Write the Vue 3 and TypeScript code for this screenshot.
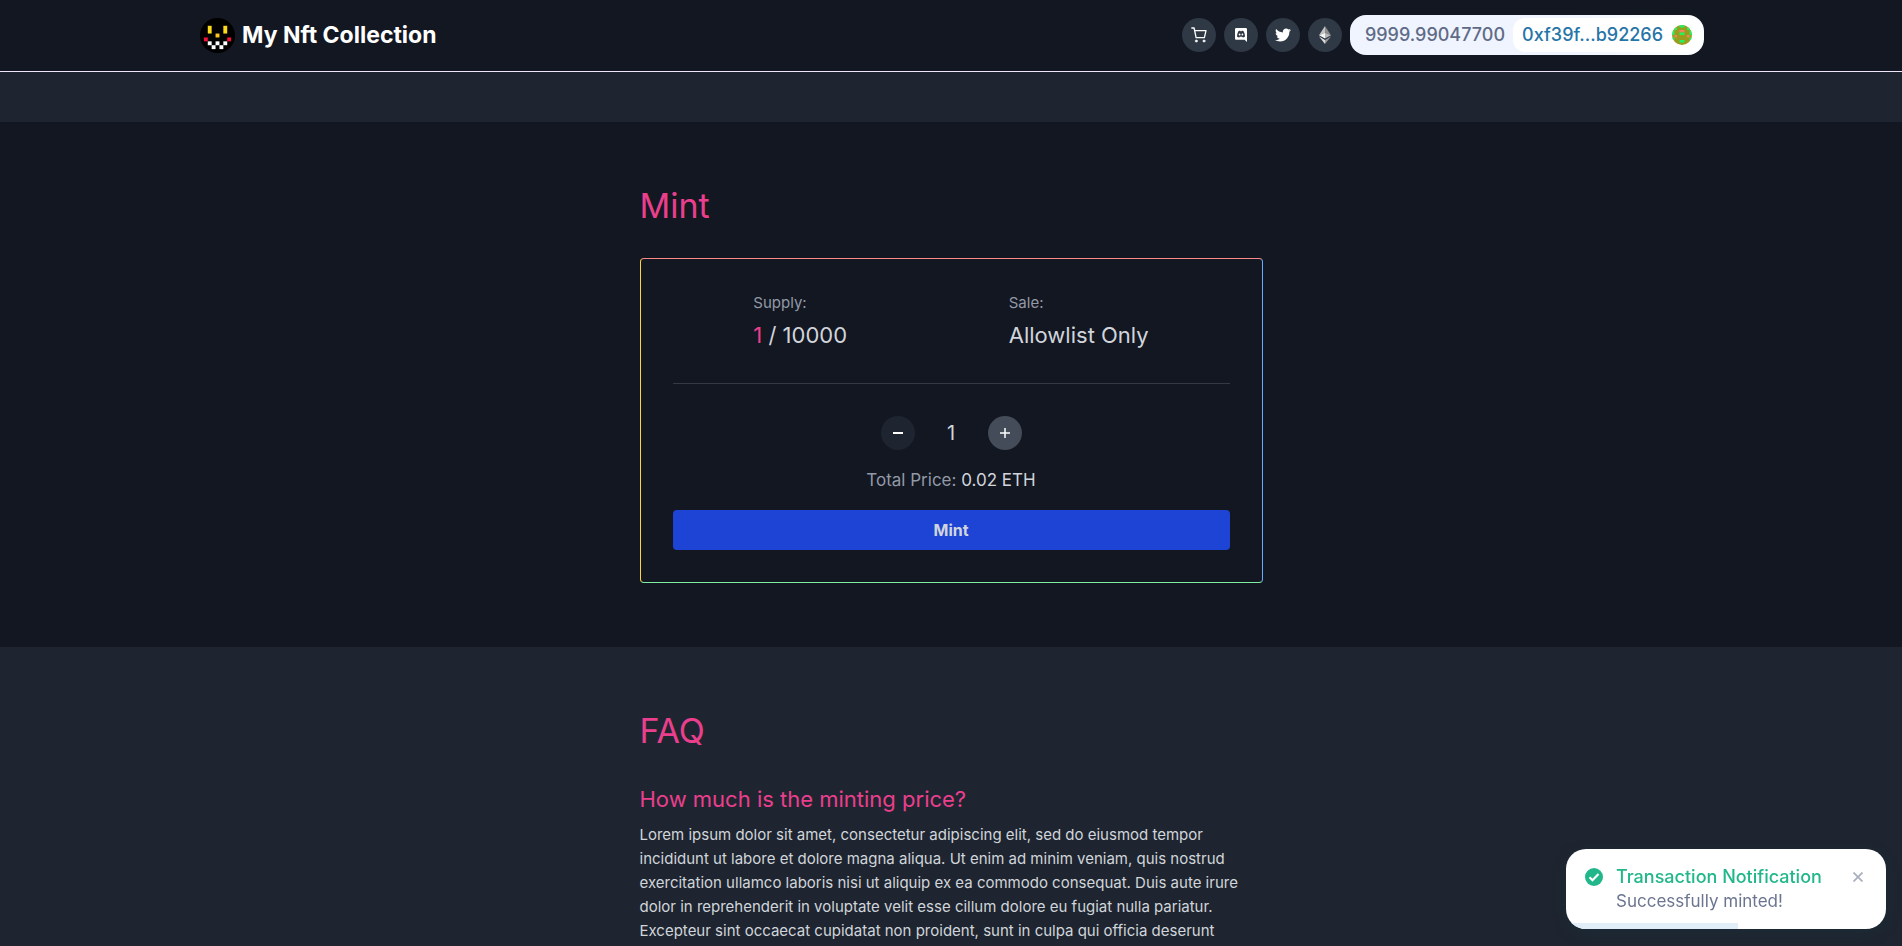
<script setup lang="ts">
import { computed, ref } from 'vue'

interface Pixel { x: number; y: number; w: number; h: number; fill: string }

const supply = 1
const maxSupply = 10000
const unitPrice = 0.02
const maxPerTx = 5
const quantity = ref(1)
const toastOpen = ref(true)
const totalPrice = computed(() => (quantity.value * unitPrice).toFixed(2))

const face: Pixel[] = [
  { x: 2, y: 2, w: 1, h: 2, fill: '#fbd91b' },
  { x: 6, y: 2, w: 1, h: 2, fill: '#fbd91b' },
  { x: 4, y: 4, w: 1, h: 1, fill: '#fbc51b' },
  { x: 1, y: 5, w: 1, h: 1, fill: '#f5133b' },
  { x: 7, y: 5, w: 1, h: 1, fill: '#f5133b' },
  { x: 2, y: 6, w: 1, h: 1, fill: '#ffffff' },
  { x: 4, y: 6, w: 1, h: 1, fill: '#ffffff' },
  { x: 6, y: 6, w: 1, h: 1, fill: '#ffffff' },
  { x: 3, y: 7, w: 1, h: 1, fill: '#ffffff' },
  { x: 5, y: 7, w: 1, h: 1, fill: '#ffffff' },
]

const blocky: Pixel[] = [
  { x: 3, y: 0, w: 2, h: 1, fill: '#25f05f' },
  { x: 1, y: 1, w: 1, h: 1, fill: '#25f05f' },
  { x: 6, y: 1, w: 1, h: 1, fill: '#25f05f' },
  { x: 0, y: 2, w: 1, h: 2, fill: '#25f05f' },
  { x: 7, y: 2, w: 1, h: 2, fill: '#25f05f' },
  { x: 3, y: 2, w: 2, h: 1, fill: '#f2845c' },
  { x: 3, y: 3, w: 2, h: 1, fill: '#25f05f' },
  { x: 1, y: 4, w: 1, h: 1, fill: '#f2845c' },
  { x: 6, y: 4, w: 1, h: 1, fill: '#f2845c' },
  { x: 0, y: 5, w: 1, h: 1, fill: '#25f05f' },
  { x: 7, y: 5, w: 1, h: 1, fill: '#25f05f' },
  { x: 3, y: 6, w: 2, h: 1, fill: '#25f05f' },
]

const faqs = [
  {
    question: 'How much is the minting price?',
    answer:
      'Lorem ipsum dolor sit amet, consectetur adipiscing elit, sed do eiusmod tempor incididunt ut labore et dolore magna aliqua. Ut enim ad minim veniam, quis nostrud exercitation ullamco laboris nisi ut aliquip ex ea commodo consequat. Duis aute irure dolor in reprehenderit in voluptate velit esse cillum dolore eu fugiat nulla pariatur. Excepteur sint occaecat cupidatat non proident, sunt in culpa qui officia deserunt',
  },
]
</script>

<template>
  <div class="page">
    <header class="header">
      <div class="header-inner">
        <a class="brand" href="#">
          <svg class="brand-logo" viewBox="0 0 9 9" aria-hidden="true">
            <circle cx="4.5" cy="4.5" r="4.5" fill="#000" />
            <rect v-for="(p, i) in face" :key="i" :x="p.x" :y="p.y" :width="p.w" :height="p.h" :fill="p.fill" />
          </svg>
          <span>My Nft Collection</span>
        </a>
        <nav class="actions">
          <a class="round" href="#" aria-label="Shop">
            <svg width="16" height="16" viewBox="0 0 16 16" fill="none" stroke="#fff" stroke-width="1.3" stroke-linecap="round" stroke-linejoin="round">
              <path d="M.8 1h2.3l2 9.6h8.3l1.6-7H3.7" />
              <circle cx="5.3" cy="14" r="1.1" fill="#fff" stroke-width=".6" />
              <circle cx="13" cy="14" r="1.1" fill="#fff" stroke-width=".6" />
            </svg>
          </a>
          <a class="round" href="#" aria-label="Discord">
            <svg width="12" height="14" viewBox="0 0 12 14" fill="#fff">
              <path fill-rule="evenodd" d="M1.3 0h9.4C11.5 0 12 .6 12 1.3V14l-2.4-2.2H1.3C.5 11.8 0 11.2 0 10.5V1.3C0 .6.5 0 1.3 0ZM2 8.6c.7.7 1.5.9 2.2.9l.6-.8h2.4l.6.8c.8 0 1.6-.3 2.2-.9 0-1.9-.4-3.7-1.2-5.2-.7-.5-1.4-.6-2-.6l-.3.4h-1l-.3-.4c-.6 0-1.3.1-2 .6C2.4 4.9 2 6.7 2 8.6Z" />
              <circle cx="4.6" cy="6.5" r=".9" /><circle cx="7.4" cy="6.5" r=".9" />
            </svg>
          </a>
          <a class="round" href="#" aria-label="Twitter">
            <svg width="16" height="16" viewBox="0 0 512 512" fill="#fff">
              <path d="M459.370 151.716c.325 4.548.325 9.097.325 13.645 0 138.720-105.583 298.558-298.558 298.558-59.452 0-114.680-17.219-161.137-47.106 8.447.974 16.568 1.299 25.340 1.299 49.055 0 94.213-16.568 130.274-44.832-46.132-.975-84.792-31.188-98.112-72.772 6.498.974 12.995 1.624 19.818 1.624 9.421 0 18.843-1.300 27.614-3.573-48.081-9.747-84.143-51.980-84.143-102.985v-1.299c13.969 7.797 30.214 12.670 47.431 13.319-28.264-18.843-46.781-51.005-46.781-87.391 0-19.492 5.197-37.360 14.294-52.954 51.655 63.675 129.300 105.258 216.365 109.807-1.624-7.797-2.599-15.918-2.599-24.040 0-57.828 46.782-104.934 104.934-104.934 30.213 0 57.502 12.670 76.670 33.137 23.715-4.548 46.456-13.320 66.599-25.340-7.798 24.366-24.366 44.833-46.132 57.827 21.117-2.273 41.584-8.122 60.426-16.243-14.292 20.791-32.161 39.308-52.628 54.253z" />
            </svg>
          </a>
          <a class="round" href="#" aria-label="Etherscan">
            <svg width="12" height="18" viewBox="0 0 12 18">
              <path d="M6 0 0 9.2 6 6.7Z" fill="#c4c4c4" /><path d="M6 0v6.7l6 2.5Z" fill="#8c8c8c" />
              <path d="m0 9.2 6 3.3V6.7Z" fill="#f4f4f4" /><path d="M12 9.2 6 12.5V6.7Z" fill="#b5b5b5" />
              <path d="m0 10.6 6 3.3V18Z" fill="#ddd" /><path d="m12 10.6-6 3.3V18Z" fill="#999" />
            </svg>
          </a>
          <button class="wallet" type="button">
            <span class="balance">9999.99047700</span>
            <span class="account">
              <span>0xf39f...b92266</span>
              <svg class="blocky" viewBox="0 0 8 8" aria-hidden="true">
                <defs><clipPath id="blocky-clip"><circle cx="4" cy="4" r="4" /></clipPath></defs>
                <g clip-path="url(#blocky-clip)">
                  <rect width="8" height="8" fill="#9b9b1c" />
                  <rect v-for="(p, i) in blocky" :key="i" :x="p.x" :y="p.y" :width="p.w" :height="p.h" :fill="p.fill" />
                </g>
              </svg>
            </span>
          </button>
        </nav>
      </div>
    </header>

    <main>
      <section class="section mint">
        <div class="column">
          <h1>Mint</h1>
          <div class="card">
            <dl class="stats">
              <div>
                <dt>Supply:</dt>
                <dd><span class="accent">{{ supply }}</span> / {{ maxSupply }}</dd>
              </div>
              <div>
                <dt>Sale:</dt>
                <dd>Allowlist Only</dd>
              </div>
            </dl>
            <div class="stepper">
              <button class="step" type="button" aria-label="Decrease" :disabled="quantity <= 1" @click="quantity--">
                <svg width="10" height="10" viewBox="0 0 10 10"><path d="M0 5h10" stroke="currentColor" stroke-width="2" /></svg>
              </button>
              <output class="quantity">{{ quantity }}</output>
              <button class="step" type="button" aria-label="Increase" :disabled="quantity >= maxPerTx" @click="quantity++">
                <svg width="10" height="10" viewBox="0 0 10 10"><path d="M0 5h10M5 0v10" stroke="currentColor" stroke-width="1.5" /></svg>
              </button>
            </div>
            <p class="price">Total Price: <span>{{ totalPrice }} ETH</span></p>
            <button class="mint-button" type="button">Mint</button>
          </div>
        </div>
      </section>

      <section class="section faq">
        <div class="column">
          <h1>FAQ</h1>
          <article v-for="item in faqs" :key="item.question">
            <h2>{{ item.question }}</h2>
            <p class="answer">{{ item.answer }}</p>
          </article>
        </div>
      </section>
    </main>

    <div v-if="toastOpen" class="toast" role="status">
      <svg class="toast-icon" viewBox="0 0 18 18" aria-hidden="true">
        <circle cx="9" cy="9" r="9" fill="#21b78a" />
        <path d="m4.5 9.3 3 3 6-6.300" fill="none" stroke="#fff" stroke-width="2.2" />
      </svg>
      <div class="toast-body">
        <strong>Transaction Notification</strong>
        <span>Successfully minted!</span>
      </div>
      <button class="toast-close" type="button" aria-label="Close" @click="toastOpen = false">
        <svg width="10" height="10" viewBox="0 0 10 10"><path d="m.5.5 9 9m0-9-9 9" stroke="#a9b0bf" stroke-width="1.8" /></svg>
      </button>
      <div class="toast-progress"></div>
    </div>
  </div>
</template>

<style>
html,
body {
  height: 100%;
  overflow: hidden;
  background: #1e2530;
}

#app {
  height: 100%;
}
</style>

<style scoped>
.page {
  height: 100%;
  overflow: hidden;
  color: #d1d5db;
  font-family: Inter, "Noto Sans", sans-serif;
  font-size: 15px;
  line-height: 24px;
}

h1,
h2,
p,
dl,
dd {
  margin: 0;
  font-weight: 400;
}

button {
  margin: 0;
  padding: 0;
  border: 0;
  font: inherit;
  color: inherit;
  cursor: pointer;
}

.header {
  background: #131722;
  border-bottom: 1px solid #efe6f9;
  margin-bottom: 50px;
}

.header-inner {
  box-sizing: border-box;
  max-width: 1506px;
  margin: 0 auto;
  padding: 15px 0 16px 2px;
  display: flex;
  align-items: center;
  justify-content: space-between;
}

.brand {
  display: flex;
  align-items: center;
  gap: 7px;
  color: #fff;
  font-size: 23px;
  font-weight: 700;
  text-decoration: none;
}

.brand-logo {
  width: 35px;
  height: 35px;
}

.actions {
  display: flex;
  align-items: center;
  gap: 8px;
}

.round,
.step {
  width: 34px;
  height: 34px;
  border-radius: 50%;
  display: flex;
  align-items: center;
  justify-content: center;
  background: #2f3845;
}

.wallet {
  display: flex;
  align-items: center;
  gap: 8px;
  padding: 3px 3px 3px 15px;
  border-radius: 16px;
  background: linear-gradient(90deg, #eff4ff 60%, #fcfdff 95%);
  color: #5f6b86;
  font-size: 18px;
  font-weight: 500;
}

.account {
  display: flex;
  align-items: center;
  gap: 9px;
  height: 34px;
  padding: 0 9px;
  border-radius: 12px;
  background: #fff;
  color: #2775a8;
}

.blocky {
  width: 20px;
  height: 20px;
}

.section {
  padding: 64px 24px;
}

.mint {
  background: #131722;
}

.faq {
  background: #1e2530;
}

.column {
  max-width: 623px;
  margin: 0 auto;
}

h1 {
  margin-bottom: 32px;
  color: #eb3f8d;
  font-size: 34px;
  line-height: 40px;
}

.card {
  padding: 32px;
  border: 1px solid;
  border-color: #fc8b88 #6aacff #7ef0a0 #ffd43b;
  border-radius: 4px;
}

.stats {
  display: flex;
  justify-content: space-around;
  padding-bottom: 32px;
  border-bottom: 1px solid #343a45;
}

dt {
  margin-bottom: 4px;
  color: #9299a6;
}

dd {
  font-size: 22px;
  line-height: 32px;
}

.accent {
  color: #eb3f8d;
}

.stepper {
  display: flex;
  align-items: center;
  justify-content: center;
  margin-top: 32px;
}

.step {
  background: #434c58;
  color: #fff;
}

.step:disabled {
  background: #1e2530;
}

.quantity {
  width: 73px;
  text-align: center;
  font-size: 20px;
}

.price {
  margin: 16px 0;
  color: #9299a6;
  font-size: 17px;
  line-height: 28px;
  text-align: center;
}

.price span {
  color: #d1d5db;
}

.mint-button {
  width: 100%;
  height: 40px;
  border-radius: 4px;
  background: #1d44d4;
  font-size: 16px;
  font-weight: 700;
}

h2 {
  margin-bottom: 8px;
  color: #eb3f8d;
  font-size: 22px;
  line-height: 32px;
}

.toast {
  position: fixed;
  right: 16px;
  bottom: 17px;
  box-sizing: border-box;
  width: 320px;
  height: 80px;
  padding: 16px 23px 0 19px;
  overflow: hidden;
  display: flex;
  align-items: flex-start;
  border-radius: 20px;
  background: #fff;
  box-shadow: 0 4px 12px rgba(27, 44, 55, 0.8);
  font-size: 18px;
}

.toast-icon {
  width: 18px;
  height: 18px;
  margin: 3px 13px 0 0;
}

.toast-body {
  flex: 1;
  display: flex;
  flex-direction: column;
  color: #6b7590;
  font-size: 17px;
}

.toast-body strong {
  color: #21b78a;
  font-size: 18px;
  font-weight: 500;
}

.toast-close {
  height: 24px;
  background: none;
  display: flex;
  align-items: center;
}

.toast-progress {
  position: absolute;
  left: 0;
  bottom: 0;
  width: 172px;
  height: 6px;
  background: #e1eef8;
}
</style>
